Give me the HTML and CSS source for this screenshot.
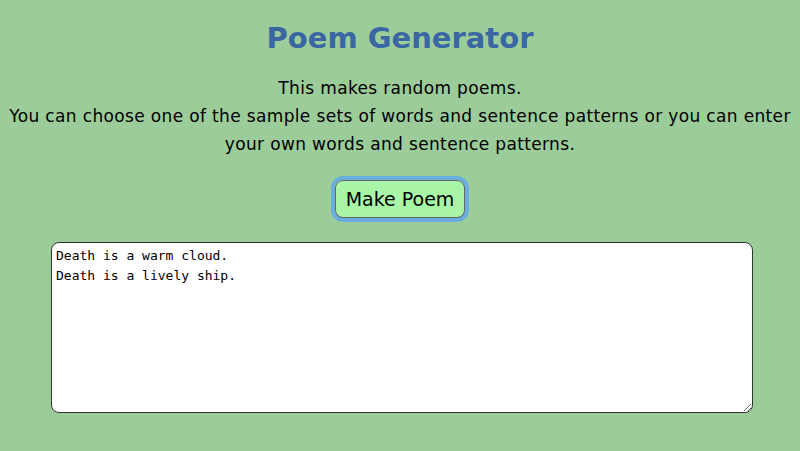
FILE: index.html
```html
<!DOCTYPE html>
<html lang="en">
<head>
  <meta charset="UTF-8" />
  <title>Poem Generator</title>
  <link rel="stylesheet" href="styles.css">
</head>
<body>
  <h1>Poem Generator</h1>
  <p class="intro">
    This makes random poems.<br>
    You can choose one of the sample sets of words and sentence patterns or you can enter your own words and sentence patterns.
  </p>
  <div class="actions">
    <button class="make-btn" id="make-poem">Make Poem</button>
  </div>
  <div class="output-wrap">
    <textarea class="poem-out" id="poem-out">Death is a warm cloud.
Death is a lively ship.</textarea>
  </div>
</body>
</html>
```
FILE: styles.css
```css
/* ===== Base ===== */
* { box-sizing: border-box; }
body { margin: 0; background: #9ccc9a; font-family: "DejaVu Sans", sans-serif; color: #000; }

h1 { margin: 20px 0 0; text-align: center; font-family: "DejaVu Sans", Verdana, sans-serif; font-size: 29px; font-weight: bold; color: #3a67a3; line-height: 36px; }

/* ===== Intro ===== */
.intro { margin: 18px 4px 0; text-align: center; font-size: 17px; letter-spacing: 0.35px; line-height: 28px; }

/* ===== Button ===== */
.actions { display: flex; justify-content: center; margin-top: 22px; }
.make-btn { font-family: "DejaVu Sans", sans-serif; font-size: 19px; height: 38px; padding: 0 10px; background: #a9f5a8; border: 1px solid #666; border-radius: 8px; box-shadow: 1px 2px 1px #555; outline: 4px solid #6aaee0; outline-offset: 0; color: #000; cursor: pointer; }

/* ===== Output ===== */
.output-wrap { padding: 24px 47px 0 51px; }
.poem-out { display: block; width: 100%; height: 171px; padding: 3px 4px; border: 1px solid #333; border-radius: 8px; background: #fff; font-family: "DejaVu Sans Mono", monospace; font-size: 13px; line-height: 20px; resize: both; }
```
